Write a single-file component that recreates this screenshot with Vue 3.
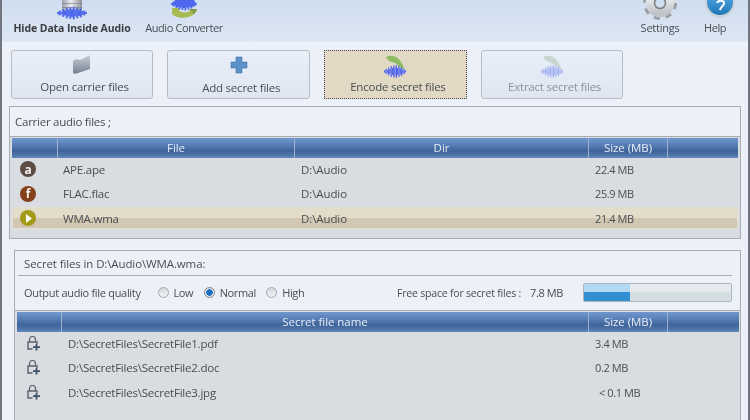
<script setup>
const carriers = [
  { name: 'APE.ape', dir: 'D:\\Audio', size: '22.4 MB', letter: 'a', tone: 'ape' },
  { name: 'FLAC.flac', dir: 'D:\\Audio', size: '25.9 MB', letter: 'f', tone: 'flac' },
  { name: 'WMA.wma', dir: 'D:\\Audio', size: '21.4 MB', letter: '', tone: 'wma', selected: true },
]
const secrets = [
  { path: 'D:\\SecretFiles\\SecretFile1.pdf', size: '3.4 MB' },
  { path: 'D:\\SecretFiles\\SecretFile2.doc', size: '0.2 MB' },
  { path: 'D:\\SecretFiles\\SecretFile3.jpg', size: '< 0.1 MB', indent: true },
]
const qualities = [
  { label: 'Low', on: false },
  { label: 'Normal', on: true },
  { label: 'High', on: false },
]
const wave = [2, 5, 3, 8, 5, 11, 7, 12, 8, 13, 7, 11, 6, 9, 4, 5, 2]
</script>

<template>
  <div class="win">
    <header class="toolbar">
      <div class="tool tool-hide">
        <svg class="ico" width="32" height="30" viewBox="0 0 32 30">
          <defs>
            <linearGradient id="cyl" x1="0" x2="1" y1="0" y2="0">
              <stop offset="0" stop-color="#9a9ea6" />
              <stop offset=".45" stop-color="#eceef1" />
              <stop offset="1" stop-color="#8c9098" />
            </linearGradient>
          </defs>
          <rect x="6" y="0" width="20" height="21" fill="url(#cyl)" />
          <path d="M6 13.5h20M6 17.5h20" stroke="#767a82" stroke-width="1" opacity=".6" />
          <rect v-for="(h, i) in wave" :key="i" :x="1 + i * 1.75" :y="23 - h * 0.48" width="2" :height="h * 0.96" fill="#4d68ec" />
        </svg>
        <strong>Hide Data Inside Audio</strong>
      </div>
      <div class="tool tool-conv">
        <svg class="ico" width="28" height="30" viewBox="0 0 28 30">
          <path d="M2 19h8l-1 3c3 2 9 2 12-1h6c-3 9-20 10-25 4z" fill="#a8bb50" />
          <path d="M19 20h8l-3 5z" fill="#7d9a45" />
          <rect v-for="(h, i) in wave" :key="i" :x="1 + i * 1.5" :y="15 - h * 0.5" width="1.8" :height="h" fill="#4d68ec" />
          <rect x="4" y="10" width="21" height="8" rx="4" fill="#4d68ec" />
        </svg>
        <span>Audio Converter</span>
      </div>
      <div class="spacer"></div>
      <div class="tool tool-set">
        <svg class="ico" width="34" height="34" viewBox="0 0 34 34">
          <defs>
            <linearGradient id="gear" x1="0" x2="0" y1="0" y2="1">
              <stop offset="0" stop-color="#f7f8f9" />
              <stop offset="1" stop-color="#c0c3c8" />
            </linearGradient>
          </defs>
          <circle cx="17" cy="17" r="15" fill="none" stroke="#9a9da2" stroke-width="4" stroke-dasharray="6 5.8" />
          <circle cx="17" cy="17" r="10" fill="none" stroke="url(#gear)" stroke-width="8.5" />
          <circle cx="17" cy="17" r="5.5" fill="none" stroke="#7f8388" stroke-width="1.6" />
        </svg>
        <span>Settings</span>
      </div>
      <div class="tool tool-help">
        <svg class="ico" width="30" height="30" viewBox="0 0 30 30">
          <defs>
            <linearGradient id="hlp" x1="0" x2="0" y1="0" y2="1">
              <stop offset="0" stop-color="#62b4ec" />
              <stop offset="1" stop-color="#1d76b8" />
            </linearGradient>
          </defs>
          <circle cx="15" cy="15" r="15" fill="#cdd3d9" />
          <circle cx="15" cy="14" r="13" fill="url(#hlp)" />
          <path d="M12 15c1-3 7-3 7 0 0 3-3 3-4 7" fill="none" stroke="#fff" stroke-width="2" />
        </svg>
        <span>Help</span>
      </div>
    </header>

    <main class="body">
      <nav class="actions">
        <button class="act">
          <svg width="20" height="20" viewBox="0 0 20 20">
            <defs>
              <linearGradient id="fold" x1="0" x2="0" y1="0" y2="1">
                <stop offset="0" stop-color="#c6cfd9" />
                <stop offset="1" stop-color="#77818e" />
              </linearGradient>
            </defs>
            <path d="M1 7l3-2 4 1 10-5v14l-15 5-2-1z" fill="url(#fold)" />
          </svg>
          <span>Open carrier files</span>
        </button>
        <button class="act act-add">
          <svg width="18" height="18" viewBox="0 0 18 18">
            <path d="M6 1h6v5h5v6h-5v5H6v-5H1V6h5z" fill="#5b92c9" stroke="#3f74a8" stroke-width=".6" />
          </svg>
          <span>Add secret files</span>
        </button>
        <button class="act act-on">
          <svg width="24" height="24" viewBox="0 0 24 24">
            <path d="M3 3C9 0 15 3 18 8c1 2 3 4 3 7-5-1-5-4-9-6C8 8 5 7 3 3z" fill="#8dbb62" />
            <rect v-for="(h, i) in wave" :key="i" :x="1 + i * 1.3" :y="17.5 - h * 0.5" width="1.3" :height="h" fill="#5468ee" />
          </svg>
          <span>Encode secret files</span>
        </button>
        <button class="act act-off">
          <svg width="24" height="24" viewBox="0 0 24 24">
            <path d="M3 3C9 0 15 3 18 8c1 2 3 4 3 7-5-1-5-4-9-6C8 8 5 7 3 3z" fill="#c8d6d0" />
            <rect v-for="(h, i) in wave" :key="i" :x="1 + i * 1.3" :y="17.5 - h * 0.5" width="1.3" :height="h" fill="#a9b8f2" />
          </svg>
          <span>Extract secret files</span>
        </button>
      </nav>

      <section class="panel panel-carrier">
        <div class="caption">Carrier audio files ;</div>
        <div class="table">
          <div class="thead cols-a">
            <div></div><div>File</div><div>Dir</div><div>Size (MB)</div><div></div>
          </div>
          <div class="tbody">
            <div v-for="c in carriers" :key="c.name" class="row cols-a" :class="{ sel: c.selected }">
              <div class="cell-ico">
                <span class="badge" :class="c.tone">
                  <template v-if="c.letter">{{ c.letter }}</template>
                  <svg v-else width="7" height="9" viewBox="0 0 7 9"><path d="M1 0l6 4.5L1 9z" fill="#fff" /></svg>
                </span>
              </div>
              <div class="txt">{{ c.name }}</div>
              <div class="txt dir">{{ c.dir }}</div>
              <div class="txt size">{{ c.size }}</div>
              <div></div>
            </div>
          </div>
        </div>
      </section>

      <section class="panel panel-secret">
        <div class="title">Secret files in D:\Audio\WMA.wma:</div>
        <div class="opts">
          <span class="opt-label">Output audio file quality</span>
          <div class="radios">
            <label v-for="q in qualities" :key="q.label" class="radio">
              <i class="dot" :class="{ on: q.on }"></i>{{ q.label }}
            </label>
          </div>
          <span class="free">Free space for secret files :</span>
          <span class="free-val">7.8 MB</span>
          <div class="bar"><div class="fill" :style="{ width: '31.5%' }"></div></div>
        </div>
        <div class="table table-secret">
          <div class="thead cols-b">
            <div></div><div>Secret file name</div><div>Size (MB)</div><div></div>
          </div>
          <div class="tbody">
            <div v-for="s in secrets" :key="s.path" class="row row-b cols-b">
              <div class="cell-lock">
                <svg width="15" height="15" viewBox="0 0 15 15">
                  <path d="M3.5 6V3.5a3 3 0 0 1 6 0V6" fill="none" stroke="#5e6369" stroke-width="1.2" />
                  <path d="M6.5 13H2V6h9v2" fill="none" stroke="#5e6369" stroke-width="1.4" />
                  <path d="M10.5 8v6.5M7 11.2h7" stroke="#3f5168" stroke-width="1.8" />
                </svg>
              </div>
              <div class="txt path">{{ s.path }}</div>
              <div class="txt size" :class="{ ind: s.indent }">{{ s.size }}</div>
              <div></div>
            </div>
          </div>
        </div>
      </section>
    </main>
  </div>
</template>

<style scoped>
.win {
  width: 750px;
  height: 420px;
  box-sizing: border-box;
  overflow: hidden;
  display: flex;
  flex-direction: column;
  background: #ecf1f9;
  border-left: 2px solid #70757f;
  border-right: 2px solid #70757f;
  font-family: "Open Sans", "Liberation Sans", sans-serif;
  font-size: 11px;
  color: #4a4d52;
  filter: blur(0.3px);
}
.toolbar {
  height: 42px;
  flex: none;
  display: flex;
  overflow: hidden;
  background: linear-gradient(#cfdef0, #dde6f3);
  padding-left: 12px;
  padding-right: 22px;
}
.tool {
  display: flex;
  flex-direction: column;
  justify-content: flex-end;
  align-items: center;
  padding-bottom: 7px;
  line-height: 14px;
  height: 42px;
  box-sizing: border-box;
  white-space: nowrap;
  letter-spacing: -0.4px;
}
.ico { flex: none; }
.tool strong { font-weight: 700; color: #3a3d42; font-size: 10.5px; letter-spacing: -0.1px; }
.tool-hide { width: 116px; }
.tool-hide .ico { margin-bottom: 1px; }
.tool-conv { margin-left: 15px; width: 78px; }
.tool-conv .ico { margin-bottom: 2px; }
.tool-set { width: 38px; letter-spacing: -0.25px; }
.tool-set .ico { margin-bottom: 1px; }
.tool-help { margin-left: 25px; width: 22px; align-items: flex-start; }
.tool-help .ico { margin-bottom: 3px; margin-left: 1px; }
.spacer { flex: 1; }

.body {
  flex: 1;
  display: flex;
  flex-direction: column;
  min-height: 0;
}
.actions {
  display: flex;
  gap: 14px;
  padding: 8px 0 0 8.7px;
  height: 49px;
  flex: none;
}
.act {
  width: 142.7px;
  height: 49px;
  box-sizing: border-box;
  border: 1.5px solid #b9bdc3;
  border-radius: 3px;
  background: linear-gradient(#e9eff9, #dfe6f2);
  display: flex;
  flex-direction: column;
  align-items: center;
  justify-content: flex-end;
  padding: 0 0 4px;
  font: inherit;
  font-size: 11.5px;
  letter-spacing: -0.22px;
  color: #4a4d52;
  line-height: 15px;
}
.act span { margin-left: 5px; }
.act svg { margin-bottom: 5px; }
.act-add { padding-bottom: 3px; }
.act-add svg { margin-bottom: 6px; }
.act-on {
  background: #e2d9c5;
  border: 1px dotted #45464a;
  border-radius: 0;
}
.act-on svg { margin-bottom: 1px; }
.act-off { color: #8e9196; }
.act-off svg { margin-bottom: 1px; }

.panel {
  box-sizing: border-box;
  border: 1.5px solid #a9adb2;
  background: #ecf1f9;
}
.panel-carrier {
  margin: 7px 7px 0 7px;
  height: 133px;
  flex: none;
  display: flex;
  flex-direction: column;
}
.caption {
  height: 29px;
  flex: none;
  line-height: 30px;
  padding-left: 5px;
  font-size: 11.5px;
  letter-spacing: -0.25px;
  border-bottom: 1.5px solid #a9adb2;
}
.table {
  flex: 1;
  background: #d9dce0;
  padding: 0 2px;
  display: flex;
  flex-direction: column;
}
.thead {
  height: 20px;
  flex: none;
  line-height: 20px;
  text-align: center;
  color: #e6edf7;
  font-size: 11.5px;
  letter-spacing: -0.05px;
  background: linear-gradient(#7097cd 0%, #5b83bb 30%, #3f6398 65%, #4d74aa 85%, #6389bd 100%);
  margin-top: 1px;
}
.thead > div { border-right: 1px solid #9db0c8; }
.thead > div:last-child { border-right: 0; }
.cols-a {
  display: grid;
  grid-template-columns: 46px 237px 294px 79px 1fr;
}
.cols-b {
  display: grid;
  grid-template-columns: 45px 527px 79px 1fr;
}
.tbody {
  display: flex;
  flex-direction: column;
  gap: 2.5px;
}
.row {
  height: 22px;
  align-items: center;
  font-size: 11.5px;
  letter-spacing: -0.2px;
}
.row.sel {
  background: linear-gradient(#e3dccb 50%, #d2c7b2 50%);
  box-shadow: inset 0 0 0 1px #e3dfd2;
}
.txt {
  padding-left: 5px;
  white-space: nowrap;
}
.txt.dir { padding-left: 6px; letter-spacing: -0.1px; }
.txt.size { padding-left: 6px; font-size: 11px; letter-spacing: -0.4px; }
.cell-ico {
  display: flex;
  padding-left: 8px;
}
.badge {
  width: 16px;
  height: 16px;
  border-radius: 50%;
  display: flex;
  align-items: center;
  justify-content: center;
  color: #f2f0ee;
  font-weight: 700;
  font-size: 12px;
  line-height: 15px;
}
.ape { background: #5d4c44; }
.flac { background: #84411a; }
.wma { background: #a39a17; }

.panel-secret {
  margin: 11px 7px 0 12px;
  flex: 1;
  border-bottom: 0;
  display: flex;
  flex-direction: column;
  min-height: 0;
}
.title {
  margin: 0 8px 0 3px;
  height: 25px;
  flex: none;
  box-sizing: border-box;
  line-height: 25px;
  padding-left: 6px;
  font-size: 11.5px;
  letter-spacing: -0.12px;
  border-bottom: 1.5px solid #a9adb2;
}
.opts {
  height: 35px;
  flex: none;
  box-sizing: border-box;
  display: flex;
  align-items: center;
  padding-left: 9px;
  padding-bottom: 1px;
  border-bottom: 1.5px solid #a9adb2;
  white-space: nowrap;
}
.opt-label { width: 133.5px; flex: none; letter-spacing: -0.3px; }
.radios {
  display: flex;
  width: 239.5px;
  flex: none;
  letter-spacing: -0.4px;
}
.radio {
  display: flex;
  align-items: center;
  gap: 5px;
  margin-right: 10.5px;
}
.dot {
  width: 11px;
  height: 11px;
  box-sizing: border-box;
  border-radius: 50%;
  border: 1px solid #a7abb0;
  background: linear-gradient(#d4d7dc, #f2f3f5);
}
.dot.on {
  background: radial-gradient(circle, #1b70c2 0 3px, #e4e8ee 3.5px);
  border-color: #7f8489;
}
.free { width: 133px; flex: none; font-size: 10.5px; letter-spacing: -0.2px; }
.free-val { width: 33px; flex: none; letter-spacing: -0.4px; }
.bar {
  margin-left: 20px;
  flex: none;
  width: 149px;
  height: 19px;
  box-sizing: border-box;
  border: 1px solid #b0b5ba;
  border-radius: 2px;
  background: linear-gradient(#e6eaef 50%, #d5dfe2 50%);
  overflow: hidden;
}
.fill {
  height: 100%;
  background: linear-gradient(#b3d8f3 50%, #2f8fd2 50%);
}
.table-secret { padding: 0 1.5px 0 2px; }
.row-b { letter-spacing: -0.22px; }
.cell-lock { display: flex; padding-left: 9px; }
.path { padding-left: 6px; }
.row-b .txt.ind { padding-left: 10px; }
</style>
